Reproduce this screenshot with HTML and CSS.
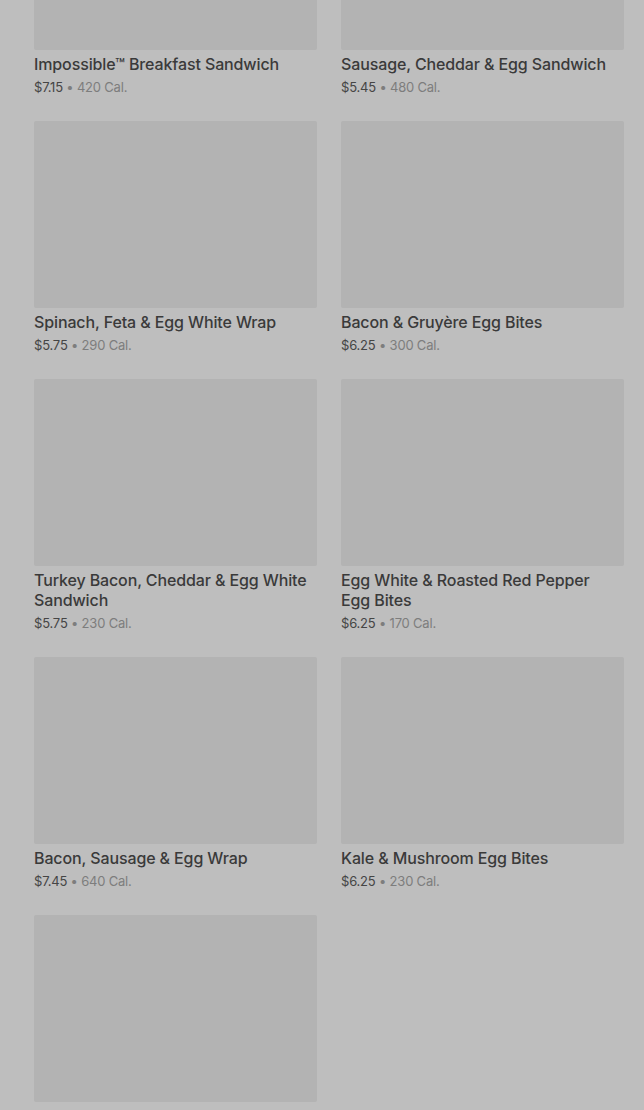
FILE: index.html
```html
<!DOCTYPE html>
<html lang="en">

<head>
  <meta charset="UTF-8" />
  <meta name="viewport" content="width=device-width, initial-scale=1.0" />
  <title>Breakfast Menu</title>
  <link rel="stylesheet" href="styles.css">
</head>

<body>
  <div class="menu-grid">
    <div class="item">
      <div class="photo"></div>
      <h3>Impossible™ Breakfast Sandwich</h3>
      <p class="meta"><span class="price">$7.15</span> • 420 Cal.</p>
    </div>
    <div class="item">
      <div class="photo"></div>
      <h3>Sausage, Cheddar &amp; Egg Sandwich</h3>
      <p class="meta"><span class="price">$5.45</span> • 480 Cal.</p>
    </div>
    <div class="item">
      <div class="photo"></div>
      <h3>Spinach, Feta &amp; Egg White Wrap</h3>
      <p class="meta"><span class="price">$5.75</span> • 290 Cal.</p>
    </div>
    <div class="item">
      <div class="photo"></div>
      <h3>Bacon &amp; Gruyère Egg Bites</h3>
      <p class="meta"><span class="price">$6.25</span> • 300 Cal.</p>
    </div>
    <div class="item">
      <div class="photo"></div>
      <h3>Turkey Bacon, Cheddar &amp; Egg White Sandwich</h3>
      <p class="meta"><span class="price">$5.75</span> • 230 Cal.</p>
    </div>
    <div class="item">
      <div class="photo"></div>
      <h3>Egg White &amp; Roasted Red Pepper Egg Bites</h3>
      <p class="meta"><span class="price">$6.25</span> • 170 Cal.</p>
    </div>
    <div class="item">
      <div class="photo"></div>
      <h3>Bacon, Sausage &amp; Egg Wrap</h3>
      <p class="meta"><span class="price">$7.45</span> • 640 Cal.</p>
    </div>
    <div class="item">
      <div class="photo"></div>
      <h3>Kale &amp; Mushroom Egg Bites</h3>
      <p class="meta"><span class="price">$6.25</span> • 230 Cal.</p>
    </div>
    <div class="item">
      <div class="photo"></div>
      <h3>Double-Smoked Bacon Sandwich</h3>
      <p class="meta"><span class="price">$6.45</span> • 500 Cal.</p>
    </div>
  </div>
</body>

</html>
```

FILE: styles.css
```css
* {
  margin: 0;
  padding: 0;
  box-sizing: border-box;
}

body {
  font-family: Inter, "Noto Sans", sans-serif;
  background: #bebebe;
  color: #3b3b3b;
  padding: 0 20px 0 34px;
  height: 1110px;
  overflow: hidden;
}

/* Menu grid (page is scrolled down a bit) */
.menu-grid {
  display: grid;
  grid-template-columns: 283px 283px;
  column-gap: 24px;
  margin-top: -137px;
}

.item {
  padding-bottom: 25px;
}

.photo {
  height: 187px;
  background: #b3b3b3;
  border-radius: 2px;
  margin-bottom: 4px;
}

.item h3 {
  font-size: 16px;
  font-weight: 500;
  line-height: 20px;
  letter-spacing: -0.12px;
  color: #3a3a3a;
  padding-right: 8px;
  margin-bottom: 4px;
}

.meta {
  font-size: 13px;
  line-height: 18px;
  letter-spacing: -0.2px;
  color: #7d7d7d;
}

.price {
  color: #454545;
}
```
